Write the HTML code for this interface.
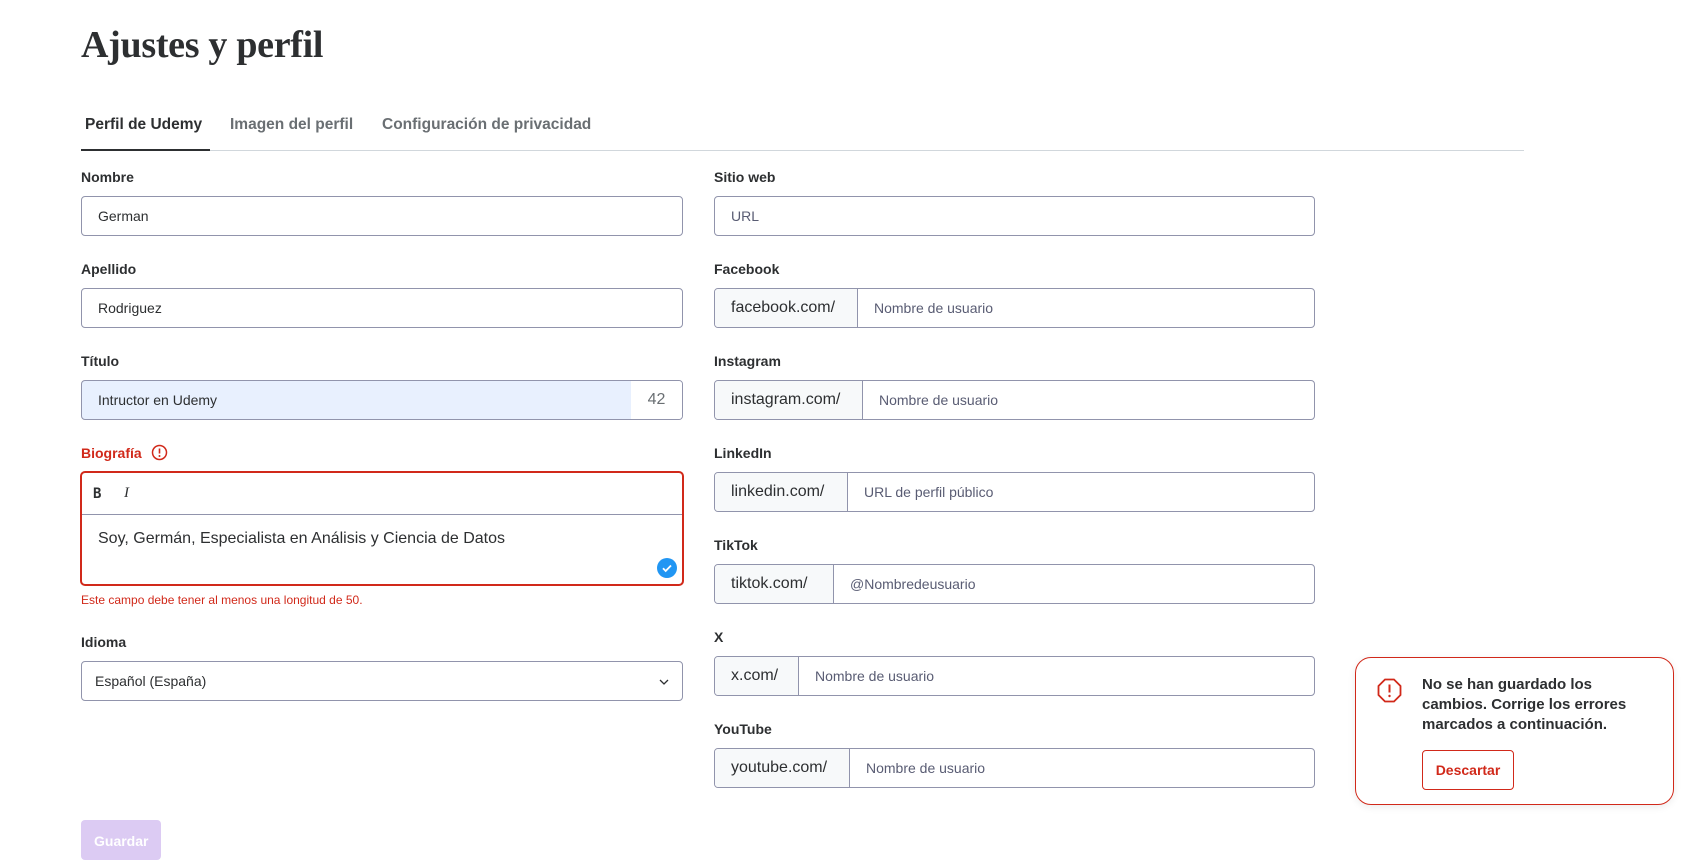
<!DOCTYPE html>
<html><head><meta charset="utf-8"><style>
*{box-sizing:border-box;margin:0;padding:0}
body{width:1682px;height:856px;overflow:hidden;background:#fff;font-family:"Liberation Sans",Arial,sans-serif;color:#2d2f31;position:relative}
.abs{position:absolute}
h1{position:absolute;left:81px;top:23px;font-family:"Liberation Serif",serif;font-size:38px;font-weight:700;color:#2d2f31;letter-spacing:-0.3px}
.tab{position:absolute;top:116px;font-size:15.5px;font-weight:700;color:#6a6f73}
.lbl{position:absolute;font-size:14px;font-weight:700;color:#2d2f31}
.inp{position:absolute;height:40px;border:1px solid #9194ac;border-radius:4px;font-size:14px;display:flex;align-items:center;padding-left:16px;color:#2d2f31;background:#fff}
.pre{position:absolute;height:40px;border:1px solid #9194ac;border-radius:4px;display:flex;align-items:center;overflow:hidden;background:#fff}
.pre .p{height:100%;background:#f7f9fa;border-right:1px solid #9194ac;display:flex;align-items:center;padding-left:16px;font-size:16px;color:#2d2f31}
.pre .v{padding-left:16px;font-size:14px;color:#595c73}
</style></head><body>
<h1>Ajustes y perfil</h1>
<div class="tab" style="left:85px;color:#2d2f31">Perfil de Udemy</div>
<div class="tab" style="left:230px">Imagen del perfil</div>
<div class="tab" style="left:382px">Configuración de privacidad</div>
<div class="abs" style="left:81px;top:150px;width:1443px;height:1px;background:#d1d7dc"></div>
<div class="abs" style="left:81px;top:149px;width:129px;height:2px;background:#2d2f31"></div>

<div class="lbl" style="left:81px;top:169px">Nombre</div>
<div class="inp" style="left:81px;top:196px;width:602px">German</div>
<div class="lbl" style="left:81px;top:261px">Apellido</div>
<div class="inp" style="left:81px;top:288px;width:602px">Rodriguez</div>
<div class="lbl" style="left:81px;top:353px">Título</div>
<div class="inp" style="left:81px;top:380px;width:602px;background:#e8f0fe;overflow:hidden">Intructor en Udemy<div class="abs" style="right:0;top:0;width:51px;height:100%;background:#fff;font-size:16px;color:#6a6f73;display:flex;align-items:center;justify-content:center">42</div></div>

<div class="lbl" style="left:81px;top:445px;color:#d1291a">Biografía</div>
<svg class="abs" style="left:151px;top:444px" width="17" height="17" viewBox="0 0 17 17"><circle cx="8.5" cy="8.5" r="7" fill="none" stroke="#d1291a" stroke-width="1.5"/><path d="M8.5 4.5v5" stroke="#d1291a" stroke-width="1.6"/><circle cx="8.5" cy="12" r="1" fill="#d1291a"/></svg>
<div class="abs" style="left:80px;top:471px;width:604px;height:115px;border:2px solid #d1291a;border-radius:5px">
 <div style="height:42px;border-bottom:1px solid #9194ac;position:relative">
  <span class="abs" style="left:11px;top:13px;font-size:14px;font-weight:700;font-family:'DejaVu Sans Mono',monospace">B</span>
  <span class="abs" style="left:42px;top:12px;font-size:15px;font-style:italic;font-family:'Liberation Serif',serif">I</span>
 </div>
 <div class="abs" style="left:16px;top:57px;font-size:16px;color:#2d2f31">Soy, Germán, Especialista en Análisis y Ciencia de Datos</div>
 <svg class="abs" style="right:5px;top:85px" width="20" height="20" viewBox="0 0 20 20"><circle cx="10" cy="10" r="10" fill="#2196f3"/><path d="M6 10.3l2.7 2.7L14 7.5" stroke="#fff" stroke-width="1.8" fill="none"/></svg>
</div>
<div class="abs" style="left:81px;top:593px;font-size:12px;color:#d1291a">Este campo debe tener al menos una longitud de 50.</div>

<div class="lbl" style="left:81px;top:634px">Idioma</div>
<div class="inp" style="left:81px;top:661px;width:602px;padding-left:13px">Español (España)<svg class="abs" style="right:12px;top:15px" width="12" height="10" viewBox="0 0 12 10"><path d="M2 3l4 4 4-4" stroke="#2d2f31" stroke-width="1.3" fill="none"/></svg></div>

<div class="abs" style="left:81px;top:820px;width:80px;height:40px;background:#dccbf3;border-radius:4px;color:#fff;font-weight:700;font-size:14px;padding:13px 0 0 13px">Guardar</div>

<div class="lbl" style="left:714px;top:169px">Sitio web</div>
<div class="inp" style="left:714px;top:196px;width:601px;color:#595c73">URL</div>
<div class="lbl" style="left:714px;top:261px">Facebook</div>
<div class="pre" style="left:714px;top:288px;width:601px"><div class="p" style="width:143px">facebook.com/</div><div class="v">Nombre de usuario</div></div>
<div class="lbl" style="left:714px;top:353px">Instagram</div>
<div class="pre" style="left:714px;top:380px;width:601px"><div class="p" style="width:148px">instagram.com/</div><div class="v">Nombre de usuario</div></div>
<div class="lbl" style="left:714px;top:445px">LinkedIn</div>
<div class="pre" style="left:714px;top:472px;width:601px"><div class="p" style="width:133px">linkedin.com/</div><div class="v">URL de perfil público</div></div>
<div class="lbl" style="left:714px;top:537px">TikTok</div>
<div class="pre" style="left:714px;top:564px;width:601px"><div class="p" style="width:119px">tiktok.com/</div><div class="v">@Nombredeusuario</div></div>
<div class="lbl" style="left:714px;top:629px">X</div>
<div class="pre" style="left:714px;top:656px;width:601px"><div class="p" style="width:84px">x.com/</div><div class="v">Nombre de usuario</div></div>
<div class="lbl" style="left:714px;top:721px">YouTube</div>
<div class="pre" style="left:714px;top:748px;width:601px"><div class="p" style="width:135px">youtube.com/</div><div class="v">Nombre de usuario</div></div>

<div class="abs" style="left:1355px;top:657px;width:319px;height:148px;border:1.5px solid #d1291a;border-radius:16px;background:#fff;box-shadow:0 2px 8px rgba(0,0,0,.08)">
 <svg class="abs" style="left:21px;top:20px" width="25" height="25" viewBox="0 0 25 25"><path d="M8 1.5h9l6.5 6.5v9L17 23.5H8L1.5 17V8z" fill="none" stroke="#d1291a" stroke-width="1.8"/><path d="M12.5 6.5v8" stroke="#d1291a" stroke-width="2"/><circle cx="12.5" cy="18" r="1.2" fill="#d1291a"/></svg>
 <div class="abs" style="left:66px;top:17px;width:218px;font-size:15px;font-weight:700;line-height:20px;color:#2d2f31">No se han guardado los cambios. Corrige los errores marcados a continuación.</div>
 <div class="abs" style="left:66px;top:92px;width:92px;height:40px;border:1.5px solid #d1291a;border-radius:4px;color:#d1291a;font-weight:700;font-size:14px;display:flex;align-items:center;justify-content:center">Descartar</div>
</div>
</body></html>
